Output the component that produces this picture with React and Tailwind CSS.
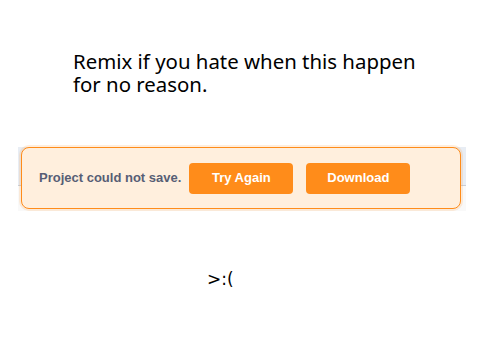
export default function App() {
  return (
    <div className="w-[480px] h-[360px] bg-white flex flex-col overflow-hidden">
      {/* heading */}
      <h1
        className="ml-[73px] mt-[50px] text-[20.4px] leading-[23px] text-black font-normal"
        style={{ fontFamily: '"Noto Sans", "Open Sans", sans-serif' }}
      >
        Remix if you hate when this happen
        <br />
        for no reason.
      </h1>

      {/* menu bar strip with the alert over it */}
      <div className="relative ml-[18px] mt-[51px] w-[448px] h-[64px]">
        <div className="h-[39px] bg-[#e8edf4] border-b border-[#c9ced6]" />
        <div className="h-[25px] bg-[#f9f9f9]" />
        <div
          className="absolute left-[3px] top-0 w-[440px] h-[62px] rounded-[8px] border border-[#ff8c1a] bg-[#ffefdd] shadow-[0_0_0_2px_rgba(255,140,26,0.15)] flex items-center pl-[17px]"
          style={{ fontFamily: '"Liberation Sans", Arial, sans-serif' }}
        >
          <span className="text-[13px] font-bold text-[#575e75] mr-[8px]">Project could not save.</span>
          <button className="w-[104px] h-[31px] rounded-[4px] bg-[#ff8c1a] text-white text-[13px] font-bold">
            Try Again
          </button>
          <button className="ml-[13px] w-[104px] h-[31px] rounded-[4px] bg-[#ff8c1a] text-white text-[13px] font-bold">
            Download
          </button>
        </div>
      </div>

      {/* face */}
      <div
        className="ml-[207px] mt-[57px] text-[17px] leading-[22px] text-black"
        style={{ fontFamily: '"DejaVu Sans", sans-serif' }}
      >
        &gt;:(
      </div>
    </div>
  )
}
